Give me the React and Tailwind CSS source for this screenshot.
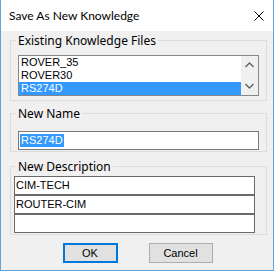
import React from 'react';

const files = ['ROVER_35', 'ROVER30', 'RS274D'];
const descriptions = ['CIM-TECH', 'ROUTER-CIM', ''];

const Chevron = ({ down }) => (
  <svg width="9" height="6" viewBox="0 0 9 6" className="text-[#606060]">
    <polyline
      points={down ? '0.5,1 4.5,5 8.5,1' : '0.5,5 4.5,1 8.5,5'}
      fill="none"
      stroke="currentColor"
      strokeWidth="1.3"
    />
  </svg>
);

const App = () => {
  return (
    <div className="w-[274px] h-[271px] bg-[#f0f0f0] border-x border-b border-[#5ea6d9] flex flex-col font-['Liberation_Sans',sans-serif] text-black">
      {/* title bar */}
      <div className="h-[31px] shrink-0 bg-white flex items-center justify-between pl-[8px] pr-[9px]">
        <span className="font-['Lato',sans-serif] text-[12px] leading-none">Save As New Knowledge</span>
        <svg width="10" height="10" viewBox="0 0 10 10">
          <path d="M0.5 0.5 L9.5 9.5 M9.5 0.5 L0.5 9.5" stroke="#000" strokeWidth="1" />
        </svg>
      </div>

      {/* existing files */}
      <fieldset className="ml-[9px] mt-[3px] w-[257px] border border-[#dcdcdc] pl-[7px] pr-[7px] pt-[8px] pb-[4px]">
        <legend className="-ml-[2px] px-[2px] font-['Noto_Sans',sans-serif] text-[12px] leading-[13px]">
          Existing Knowledge Files
        </legend>
        <div className="h-[41px] w-[241px] border border-[#828790] bg-white flex">
          <div className="flex-1 flex flex-col">
            {files.map((f, i) => (
              <div
                key={f}
                className={`h-[13px] pl-[2px] text-[11px] leading-[13px] ${i === 2 ? 'bg-[#3399ff] text-white' : ''}`}
              >
                {f}
              </div>
            ))}
          </div>
          <div className="w-[17px] bg-[#f0f0f0] flex flex-col items-center justify-between py-[6px]">
            <Chevron />
            <Chevron down />
          </div>
        </div>
      </fieldset>

      {/* new name */}
      <fieldset className="ml-[9px] mt-[6px] w-[257px] border border-[#dcdcdc] pl-[7px] pr-[7px] pt-[11px] pb-[1px]">
        <legend className="-ml-[2px] px-[2px] font-['Noto_Sans',sans-serif] text-[12px] leading-[13px]">
          New Name
        </legend>
        <div className="h-[19px] w-[241px] border border-[#7a7a7a] bg-white flex items-center pl-[1px]">
          <span className="bg-[#3399ff] text-white text-[11px] leading-[13px] px-[1px]">RS274D</span>
        </div>
      </fieldset>

      {/* new description */}
      <fieldset className="ml-[9px] mt-[8px] w-[257px] border border-[#dcdcdc] pl-[3px] pr-[11px] pt-[3px] pb-[1px]">
        <legend className="ml-[2px] px-[2px] font-['Noto_Sans',sans-serif] text-[12px] leading-[13px]">
          New Description
        </legend>
        <div className="flex flex-col w-[241px]">
          {descriptions.map((d, i) => (
            <div
              key={i}
              className="h-[19px] border border-[#6a6a6a] bg-white pl-[1px] text-[11px] leading-[17px]"
            >
              {d}
            </div>
          ))}
        </div>
      </fieldset>

      {/* buttons */}
      <div className="mt-[8px] flex justify-center gap-[31px] pl-[1px]">
        <button className="w-[55px] h-[20px] bg-[#e1e1e1] border-2 border-[#0078d7] text-[11px] leading-none">
          OK
        </button>
        <button className="w-[64px] h-[20px] bg-[#e1e1e1] border border-[#adadad] text-[11px] leading-none">
          Cancel
        </button>
      </div>
    </div>
  );
};

export default App;
